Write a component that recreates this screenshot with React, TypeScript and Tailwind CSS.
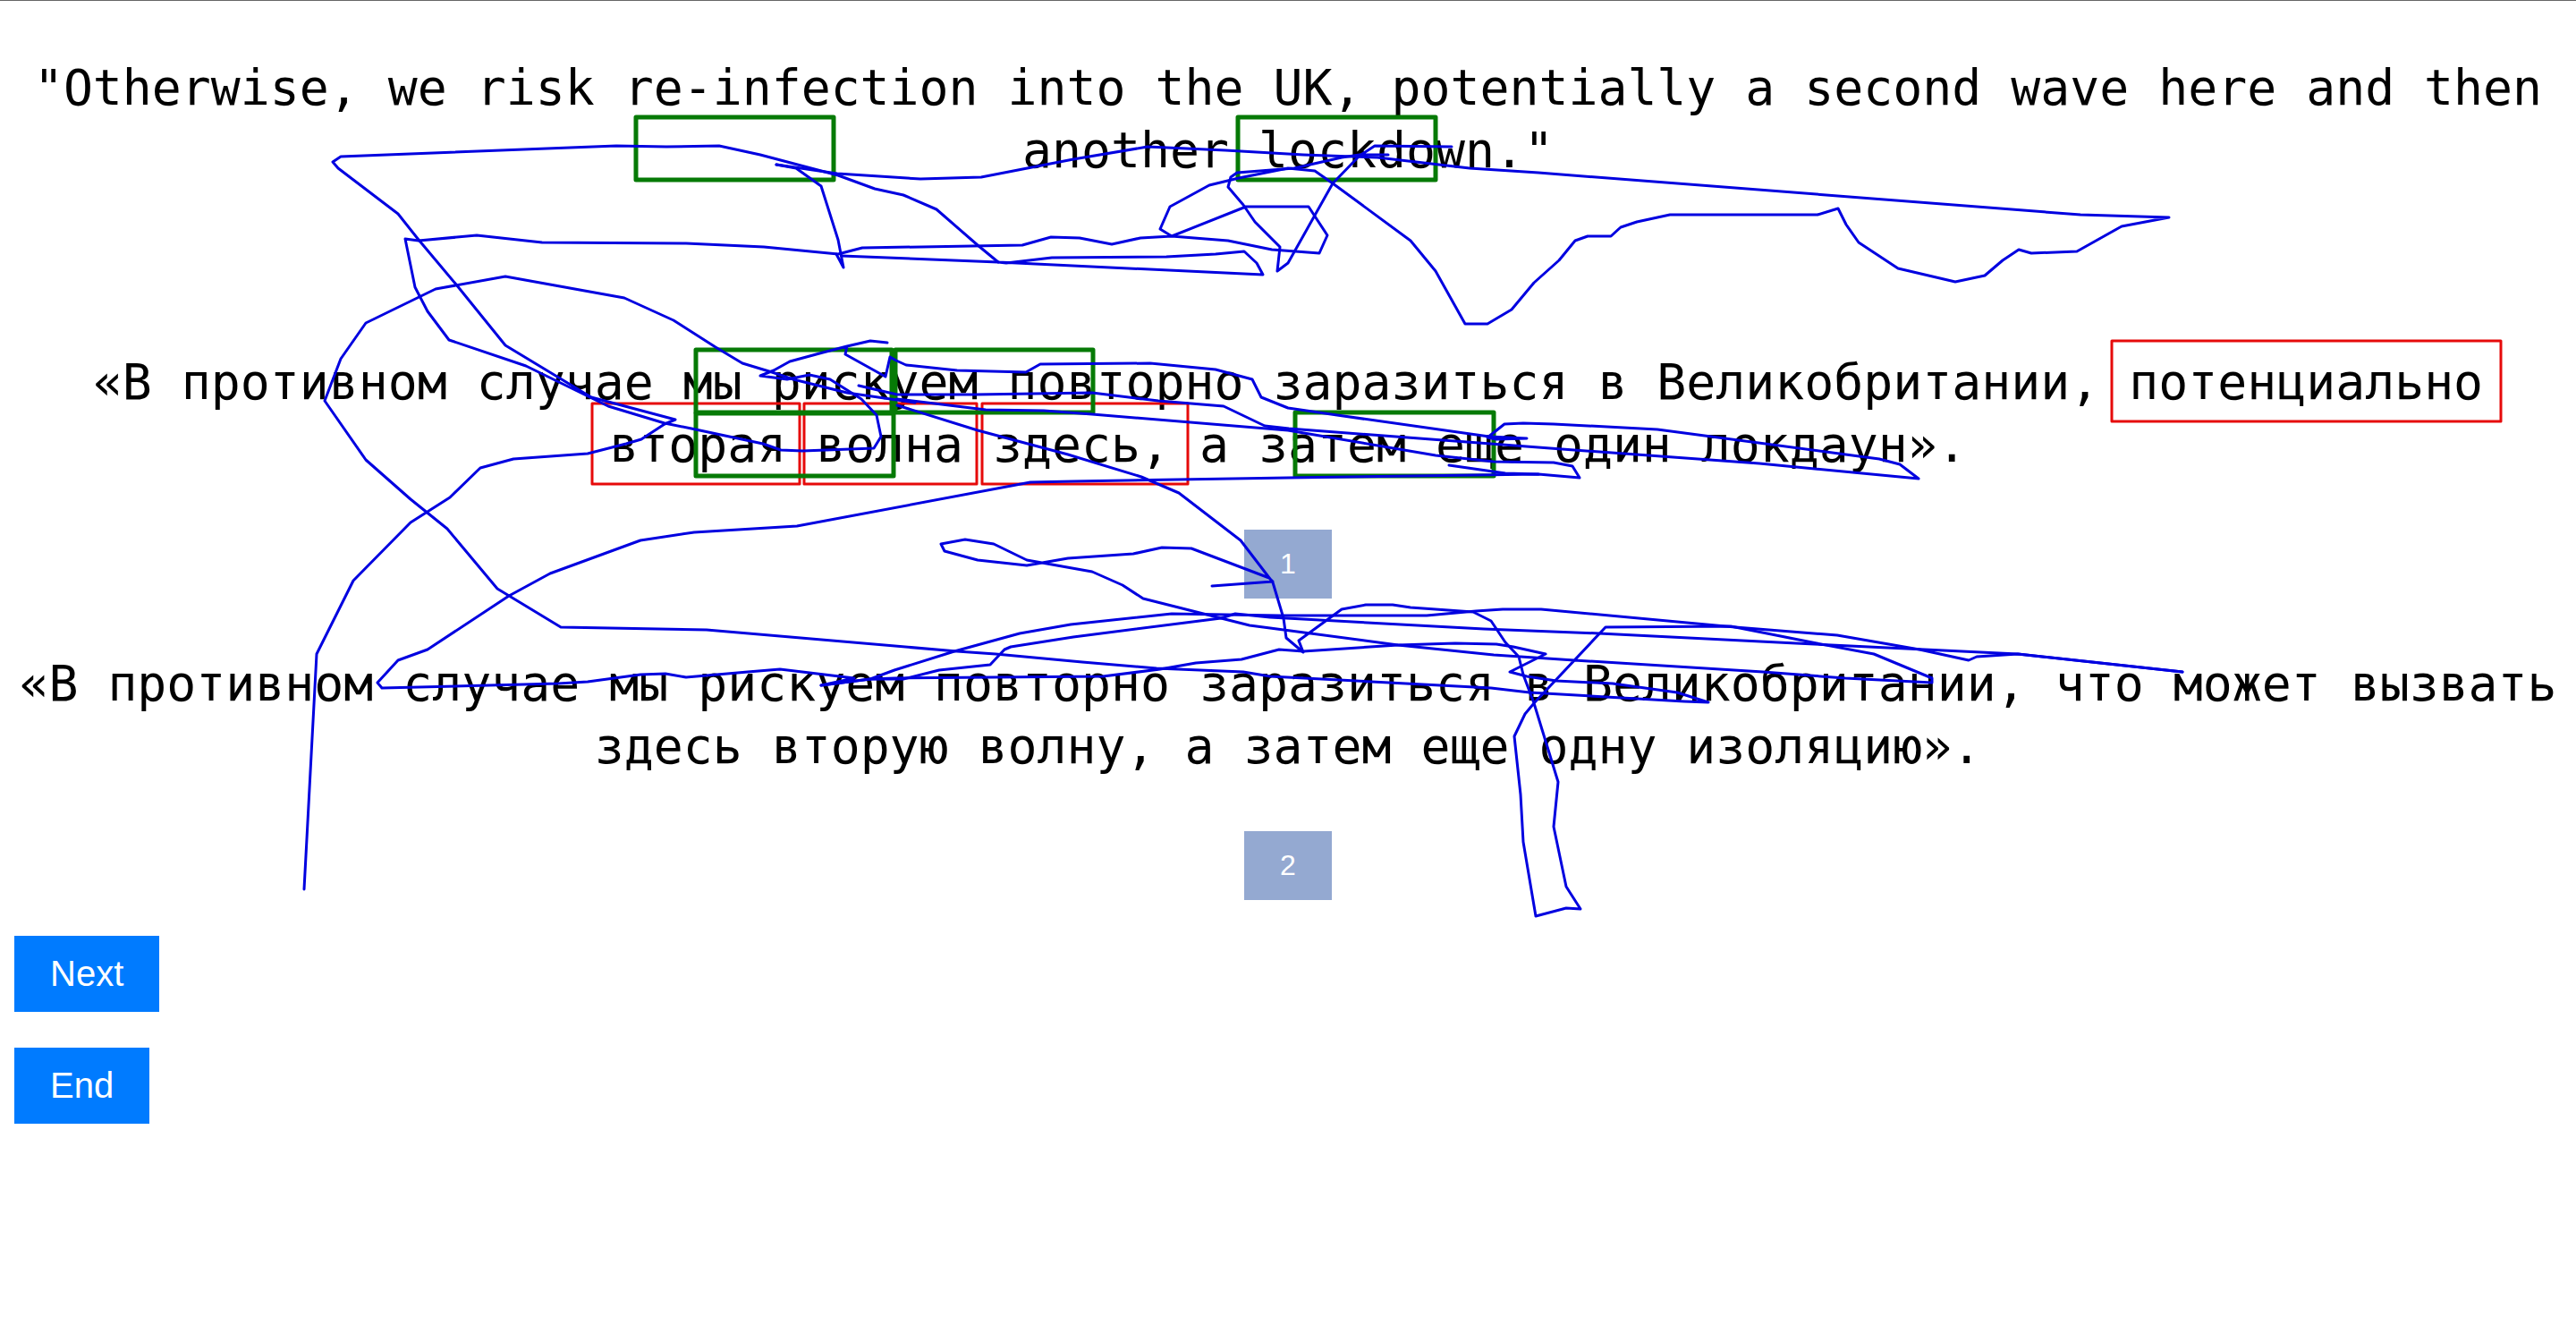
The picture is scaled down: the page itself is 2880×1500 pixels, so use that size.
const strokes: [number, number][][] = [
  // long wave from the blob to the right, back through the first loop and down the left
  [[868,183],[936,193],[1029,199],[1097,197],[1200,177],[1283,163],[1370,167],[1457,172],[1540,175],[1643,187],[1720,192],[2326,239],[2425,242],[2372,252],[2322,280],[2271,282],[2257,278],[2239,290],[2219,307],[2186,314],[2122,299],[2078,270],[2064,250],[2055,232],[2032,239],[1867,239],[1830,247],[1812,253],[1801,263],[1775,263],[1761,268],[1743,290],[1715,315],[1690,345],[1663,361],[1638,361],[1605,302],[1577,268],[1490,204],[1470,190],[1440,187],[1385,198],[1352,206],[1308,230],[1297,255],[1310,263],[1393,230],[1463,230],[1484,262],[1475,282],[1422,278],[1373,268],[1310,263],[1275,265],[1243,272],[1207,265],[1175,264],[1143,273],[964,276],[937,283],[854,275],[767,271],[606,270],[533,262],[468,268],[453,266],[464,320],[478,347],[502,379],[588,408],[680,453],[743,472],[773,478],[853,495],[873,502],[897,503],[977,500],[985,487],[980,463],[963,445],[928,423],[905,418],[880,423],[850,419],[865,413],[883,403],[920,393],[947,386],[973,380],[992,382],[973,380],[947,386],[945,395],[990,420],[995,398],[1002,402],[1013,407],[1070,413],[1147,415],[1163,406],[1286,405],[1359,412],[1400,423],[1410,443],[1440,455],[1495,463],[1665,487],[1707,489],[1673,490],[1663,488],[1682,473],[1703,472],[1737,473],[1853,479],[2101,512],[2124,518],[2145,534],[1967,517],[1733,500],[1600,490],[1441,478],[1414,475],[1368,453],[1295,447],[1221,438],[1090,440],[1003,440],[960,430]],
  [[1623,163],[1537,162],[1520,173],[1490,204],[1440,293],[1428,302],[1431,275],[1403,247],[1390,228],[1373,208],[1376,197],[1383,192],[1447,187],[1500,175],[1520,172],[1552,172]],
  [[868,183],[890,187],[918,207],[937,267],[943,298],[935,283]],
  [[1116,292],[1093,273],[1047,233],[1010,217],[978,210],[937,195],[850,172],[804,162],[745,163],[689,162],[381,174],[372,180],[378,187],[445,238],[468,267],[510,317],[565,385],[661,443],[755,468],[743,473],[717,490],[700,495],[657,506],[574,512],[537,522],[503,555],[459,583],[395,648],[354,730],[340,993]],
  [[941,285],[1116,292],[1412,306],[1405,293],[1391,280],[1359,283],[1304,286],[1176,287],[1125,293],[1116,292]],
  // second row tangle and the sweep under the first badge
  [[1023,449],[947,438],[887,423],[863,415],[830,405],[800,387],[753,357],[698,332],[565,308],[487,322],[409,360],[381,400],[363,447],[409,513],[459,557],[500,590],[556,657],[627,700],[790,703],[1070,727],[1113,730],[1210,739],[1293,746],[1390,750],[1420,755],[1667,768],[1710,773],[1883,783],[1910,784],[1875,773],[1803,763],[1740,760],[1707,755],[1688,750],[1728,730],[1692,722],[1673,719],[1627,718],[1563,720],[1457,727],[1430,725],[1388,736],[1337,740],[1297,747],[1233,755],[1000,757],[973,758],[918,765],[955,757],[872,747],[836,750],[767,756],[744,752],[716,753],[657,761],[624,763],[427,768],[422,762],[445,737],[478,725],[569,665],[615,640],[716,603],[776,594],[891,587],[1152,538],[1200,537],[1440,533],[1720,529],[1766,533],[1758,520],[1737,516],[1670,515],[1605,508],[1440,480],[1221,462],[1167,458],[1102,457],[1003,445]],
  [[1620,519],[1683,528],[1720,529]],
  [[1003,452],[1093,480],[1194,507],[1276,532],[1318,550],[1387,603],[1423,650],[1435,690],[1438,712],[1457,728],[1452,715],[1500,680],[1527,675],[1557,675],[1577,678],[1647,683],[1667,693],[1683,717],[1698,733],[1703,753],[1715,785],[1742,873],[1737,923],[1751,990],[1767,1015],[1751,1014],[1717,1023],[1703,940],[1700,887],[1693,822],[1705,797],[1715,785],[1795,700],[1935,699],[2031,718],[2095,730],[2160,757],[2160,762],[2063,757],[1971,750],[1760,737],[1670,731],[1563,720],[1420,701],[1397,698],[1278,668],[1255,653],[1221,638],[1148,625],[1111,607],[1079,602],[1052,607],[1056,615],[1093,625],[1148,631],[1194,623],[1267,618],[1299,611],[1332,612],[1419,645],[1423,649],[1355,654]],
  [[2440,750],[2256,730],[2210,733],[2201,737],[2146,725],[2054,709],[1940,700],[1723,680],[1680,680],[1650,682],[1595,687],[1430,687],[1310,685],[1197,697],[1140,707],[1067,727],[1000,748],[973,758],[918,765]],
  [[2440,750],[2256,730],[2008,718],[1788,707],[1659,702],[1420,689],[1381,685],[1365,690],[1200,711],[1130,722],[1123,725],[1107,742],[1050,748],[1010,758],[973,758]],
];

// outer bounds of the boxes, the stroke sits on their inner edge
const greenBoxes = [
  [709, 128, 225, 74],
  [1382, 128, 225, 74],
  [776, 388, 223, 74],
  [999, 388, 225, 74],
  [776, 459, 225, 74],
  [1446, 458, 226, 75],
];

const redBoxes = [
  [2360, 379, 437, 92],
  [661, 449, 234, 92],
  [898, 449, 195, 92],
  [1097, 449, 232, 92],
];

function Annotations() {
  return (
    <svg className="absolute top-0 left-0" width={2880} height={1500}>
      {redBoxes.map(([x, y, w, h]) => (
        <rect key={`${x}-${y}`} x={x + 1} y={y + 1} width={w - 2} height={h - 2} fill="none" stroke="#e60a0a" strokeWidth={3} strokeLinejoin="round" />
      ))}
      {greenBoxes.map(([x, y, w, h]) => (
        <rect key={`${x}-${y}`} x={x + 2} y={y + 2} width={w - 4} height={h - 4} fill="none" stroke="#067a06" strokeWidth={5} strokeLinejoin="round" />
      ))}
      {strokes.map((points, i) => (
        <polyline key={i} points={points.map((p) => p.join(",")).join(" ")} fill="none" stroke="#0000e0" strokeWidth={3} strokeLinejoin="round" strokeLinecap="round" />
      ))}
    </svg>
  );
}

function Sentence({ children, className }: { children: string; className: string }) {
  return (
    <p className={`text-center font-['DejaVu_Sans_Mono',monospace] text-[54.8px] leading-[70px] text-black ${className}`}>
      {children}
    </p>
  );
}

function Badge({ children }: { children: string }) {
  return (
    <div className="mx-auto flex h-[77px] w-[98px] items-center justify-center bg-[#94a9d1] pb-0.5 font-['Liberation_Sans',sans-serif] text-[32px] text-white">
      {children}
    </div>
  );
}

function ActionButton({ children }: { children: string }) {
  return (
    <button
      type="button"
      className="block bg-[#007bff] px-10 py-5 font-['Liberation_Sans',sans-serif] text-[40px] leading-[45px] text-white"
    >
      {children}
    </button>
  );
}

export default function App() {
  return (
    <div className="relative min-h-[1500px] w-[2880px] overflow-hidden border-t border-[#666666] bg-white">
      <Sentence className="mt-[62px]">
        "Otherwise, we risk re-infection into the UK, potentially a second wave here and then another lockdown."
      </Sentence>
      <Sentence className="mt-[189px]">
        «В противном случае мы рискуем повторно заразиться в Великобритании, потенциально вторая волна здесь, а затем еще один локдаун».
      </Sentence>
      <div className="mt-[60px]">
        <Badge>1</Badge>
      </div>
      <Sentence className="mt-[60px]">
        «В противном случае мы рискуем повторно заразиться в Великобритании, что может вызвать здесь вторую волну, а затем еще одну изоляцию».
      </Sentence>
      <div className="mt-[60px]">
        <Badge>2</Badge>
      </div>
      <div className="mt-10 ml-4 flex flex-col items-start gap-10">
        <ActionButton>Next</ActionButton>
        <ActionButton>End</ActionButton>
      </div>
      <Annotations />
    </div>
  );
}
